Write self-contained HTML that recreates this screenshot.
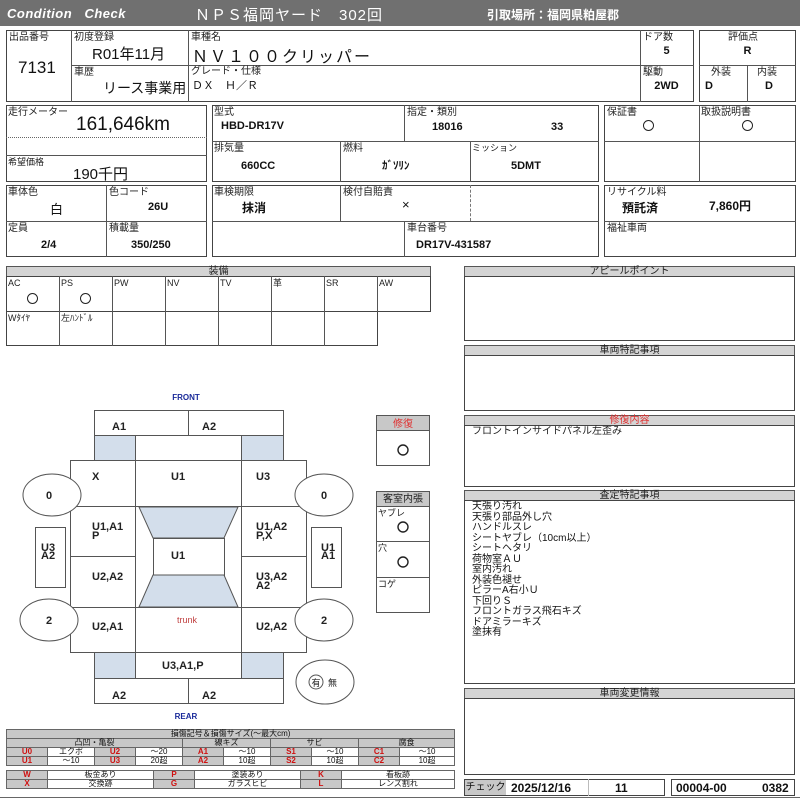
<!DOCTYPE html>
<html><head><meta charset="utf-8">
<style>
*{margin:0;padding:0;box-sizing:border-box}
body{width:800px;height:800px;background:#fff;position:relative;overflow:hidden;font-family:"Liberation Sans","Noto Sans CJK JP",sans-serif;color:#111}
.a{position:absolute}
.bx{position:absolute;border:1px solid #444}
.l{position:absolute;font-size:10px;color:#222;white-space:nowrap;line-height:11px}
.v{position:absolute;font-size:12px;font-weight:bold;white-space:nowrap;text-align:center;line-height:14px}
.hl{position:absolute;height:1px;background:#555}
.vl{position:absolute;width:1px;background:#555}
.hd{position:absolute;background:#d4d4d4;border:1px solid #555;font-size:10px;line-height:9px;text-align:center;color:#222}
.o{position:absolute;width:11px;height:11px;border:1.5px solid #222;border-radius:50%}
table.lg{position:absolute;border-collapse:collapse;font-size:8px;table-layout:fixed}
table.lg td{border:1px solid #666;text-align:center;height:9px;line-height:8px;padding:0;white-space:nowrap}
td.r{background:#c8c8c8;color:#d01010;font-weight:bold}
td.g{background:#c8c8c8}
</style></head><body>

<!-- header -->
<div class="a" style="left:0;top:0;width:800px;height:26px;background:#707070"></div>
<div class="a" style="left:7px;top:6px;color:#fff;font-style:italic;font-weight:bold;font-size:13px;letter-spacing:0.5px">Condition&nbsp;&nbsp;&nbsp;Check</div>
<div class="a" style="left:195px;top:4px;color:#fff;font-size:15px;letter-spacing:1px">ＮＰＳ福岡ヤード　302回</div>
<div class="a" style="left:487px;top:6px;color:#fff;font-size:12px;font-weight:bold">引取場所：福岡県粕屋郡</div>

<!-- top block -->
<div class="bx" style="left:6px;top:30px;width:688px;height:72px"></div>
<div class="vl" style="left:71px;top:30px;height:72px"></div>
<div class="vl" style="left:188px;top:30px;height:72px"></div>
<div class="vl" style="left:640px;top:30px;height:72px"></div>
<div class="hl" style="left:71px;top:65px;width:623px"></div>
<div class="l" style="left:9px;top:32px">出品番号</div>
<div class="a" style="left:18px;top:58px;font-size:17px">7131</div>
<div class="l" style="left:74px;top:32px">初度登録</div>
<div class="a" style="left:92px;top:43px;font-size:15px">R01年11月</div>
<div class="l" style="left:74px;top:67px">車歴</div>
<div class="a" style="left:103px;top:78px;font-size:14px">リース事業用</div>
<div class="l" style="left:191px;top:32px">車種名</div>
<div class="a" style="left:192px;top:43px;font-size:16px;letter-spacing:2px">ＮＶ１００クリッパー</div>
<div class="l" style="left:191px;top:66px">グレード・仕様</div>
<div class="a" style="left:192px;top:77px;font-size:11px">ＤＸ　Ｈ／Ｒ</div>
<div class="l" style="left:643px;top:32px">ドア数</div>
<div class="v" style="left:640px;top:44px;width:53px;font-size:11px">5</div>
<div class="l" style="left:643px;top:67px">駆動</div>
<div class="v" style="left:640px;top:79px;width:53px;font-size:11px">2WD</div>
<div class="bx" style="left:699px;top:30px;width:97px;height:72px"></div>
<div class="hl" style="left:699px;top:65px;width:97px"></div>
<div class="vl" style="left:747px;top:65px;height:37px"></div>
<div class="l" style="left:728px;top:32px">評価点</div>
<div class="v" style="left:699px;top:44px;width:97px;font-size:11px">R</div>
<div class="l" style="left:711px;top:67px">外装</div>
<div class="l" style="left:757px;top:67px">内装</div>
<div class="v" style="left:705px;top:79px;font-size:11px">D</div>
<div class="v" style="left:765px;top:79px;font-size:11px">D</div>

<!-- row 2 -->
<div class="bx" style="left:6px;top:105px;width:201px;height:77px"></div>
<div class="a" style="left:6px;top:137px;width:201px;border-top:1px dotted #666"></div>
<div class="hl" style="left:6px;top:155px;width:201px"></div>
<div class="l" style="left:8px;top:107px">走行メーター</div>
<div class="a" style="left:76px;top:114px;font-size:19px">161,646km</div>
<div class="l" style="left:8px;top:157px;font-size:9px">希望価格</div>
<div class="a" style="left:73px;top:163px;font-size:15px">190千円</div>

<div class="bx" style="left:212px;top:105px;width:387px;height:77px"></div>
<div class="hl" style="left:212px;top:141px;width:387px"></div>
<div class="vl" style="left:404px;top:105px;height:36px"></div>
<div class="vl" style="left:340px;top:141px;height:41px"></div>
<div class="vl" style="left:470px;top:141px;height:41px"></div>
<div class="l" style="left:214px;top:107px">型式</div>
<div class="v" style="left:221px;top:119px;font-size:11px">HBD-DR17V</div>
<div class="l" style="left:407px;top:107px">指定・類別</div>
<div class="v" style="left:432px;top:120px;font-size:11px">18016</div>
<div class="v" style="left:551px;top:120px;font-size:11px">33</div>
<div class="l" style="left:214px;top:143px">排気量</div>
<div class="v" style="left:241px;top:159px;font-size:11px">660CC</div>
<div class="l" style="left:343px;top:143px">燃料</div>
<div class="v" style="left:382px;top:159px;font-size:11px">ｶﾞｿﾘﾝ</div>
<div class="l" style="left:472px;top:143px;font-size:9px">ミッション</div>
<div class="v" style="left:511px;top:159px;font-size:11px">5DMT</div>

<div class="bx" style="left:604px;top:105px;width:192px;height:77px"></div>
<div class="hl" style="left:604px;top:141px;width:192px"></div>
<div class="vl" style="left:699px;top:105px;height:77px"></div>
<div class="l" style="left:607px;top:107px">保証書</div>
<div class="o" style="left:643px;top:120px"></div>
<div class="l" style="left:701px;top:107px">取扱説明書</div>
<div class="o" style="left:742px;top:120px"></div>

<!-- row 3 -->
<div class="bx" style="left:6px;top:185px;width:201px;height:72px"></div>
<div class="hl" style="left:6px;top:221px;width:201px"></div>
<div class="vl" style="left:106px;top:185px;height:72px"></div>
<div class="l" style="left:8px;top:187px">車体色</div>
<div class="a" style="left:50px;top:199px;font-size:13px">白</div>
<div class="l" style="left:109px;top:187px">色コード</div>
<div class="v" style="left:148px;top:200px;font-size:11px">26U</div>
<div class="l" style="left:8px;top:223px">定員</div>
<div class="v" style="left:41px;top:238px;font-size:11px">2/4</div>
<div class="l" style="left:109px;top:223px">積載量</div>
<div class="v" style="left:131px;top:238px;font-size:11px">350/250</div>

<div class="bx" style="left:212px;top:185px;width:387px;height:72px"></div>
<div class="hl" style="left:212px;top:221px;width:387px"></div>
<div class="vl" style="left:340px;top:185px;height:36px"></div>
<div class="a" style="left:470px;top:185px;height:36px;border-left:1px dashed #777"></div>
<div class="vl" style="left:404px;top:221px;height:36px"></div>
<div class="l" style="left:214px;top:187px">車検期限</div>
<div class="a" style="left:242px;top:199px;font-size:12px;font-weight:bold">抹消</div>
<div class="l" style="left:343px;top:187px">検付自賠責</div>
<div class="a" style="left:402px;top:197px;font-size:13px">×</div>
<div class="l" style="left:407px;top:223px">車台番号</div>
<div class="v" style="left:416px;top:238px;font-size:11px">DR17V-431587</div>

<div class="bx" style="left:604px;top:185px;width:192px;height:72px"></div>
<div class="hl" style="left:604px;top:221px;width:192px"></div>
<div class="l" style="left:607px;top:187px">リサイクル料</div>
<div class="a" style="left:622px;top:199px;font-size:12px;font-weight:bold">預託済</div>
<div class="v" style="left:709px;top:199px;font-size:12px">7,860円</div>
<div class="l" style="left:607px;top:223px">福祉車両</div>

<!-- 装備 -->
<div class="hd" style="left:6px;top:266px;width:425px;height:11px">装備</div>
<div class="bx" style="left:6px;top:276px;width:425px;height:36px"></div>
<div class="bx" style="left:6px;top:311px;width:372px;height:35px"></div>
<div class="vl" style="left:59px;top:276px;height:70px"></div>
<div class="vl" style="left:112px;top:276px;height:70px"></div>
<div class="vl" style="left:165px;top:276px;height:70px"></div>
<div class="vl" style="left:218px;top:276px;height:70px"></div>
<div class="vl" style="left:271px;top:276px;height:70px"></div>
<div class="vl" style="left:324px;top:276px;height:70px"></div>
<div class="vl" style="left:377px;top:276px;height:36px"></div>
<div class="l" style="left:8px;top:278px;font-size:9px">AC</div>
<div class="l" style="left:61px;top:278px;font-size:9px">PS</div>
<div class="l" style="left:114px;top:278px;font-size:9px">PW</div>
<div class="l" style="left:167px;top:278px;font-size:9px">NV</div>
<div class="l" style="left:220px;top:278px;font-size:9px">TV</div>
<div class="l" style="left:273px;top:278px;font-size:9px">革</div>
<div class="l" style="left:326px;top:278px;font-size:9px">SR</div>
<div class="l" style="left:379px;top:278px;font-size:9px">AW</div>
<div class="o" style="left:27px;top:293px"></div>
<div class="o" style="left:80px;top:293px"></div>
<div class="l" style="left:8px;top:313px;font-size:9px">Wﾀｲﾔ</div>
<div class="l" style="left:61px;top:313px;font-size:9px">左ﾊﾝﾄﾞﾙ</div>

<!-- right panels -->
<div class="hd" style="left:464px;top:266px;width:331px;height:11px">アピールポイント</div>
<div class="bx" style="left:464px;top:276px;width:331px;height:65px"></div>
<div class="hd" style="left:464px;top:345px;width:331px;height:11px">車両特記事項</div>
<div class="bx" style="left:464px;top:355px;width:331px;height:56px"></div>
<div class="hd" style="left:464px;top:415px;width:331px;height:11px;color:#e03030">修復内容</div>
<div class="bx" style="left:464px;top:425px;width:331px;height:62px"></div>
<div class="l" style="left:472px;top:426px">フロントインサイドパネル左歪み</div>
<div class="hd" style="left:464px;top:490px;width:331px;height:11px">査定特記事項</div>
<div class="bx" style="left:464px;top:500px;width:331px;height:184px"></div>
<div class="a" style="left:472px;top:502px;font-size:10px;line-height:10.5px">天張り汚れ<br>天張り部品外し穴<br>ハンドルスレ<br>シートヤブレ（10cm以上）<br>シートヘタリ<br>荷物室ＡＵ<br>室内汚れ<br>外装色褪せ<br>ピラーA右小Ｕ<br>下回りＳ<br>フロントガラス飛石キズ<br>ドアミラーキズ<br>塗抹有</div>
<div class="hd" style="left:464px;top:688px;width:331px;height:11px">車両変更情報</div>
<div class="bx" style="left:464px;top:698px;width:331px;height:77px"></div>

<div class="bx" style="left:464px;top:779px;width:201px;height:17px"></div>
<div class="a" style="left:465px;top:780px;width:41px;height:15px;background:#c8c8c8;font-size:10px;line-height:15px;text-align:center">チェック</div>
<div class="vl" style="left:588px;top:779px;height:17px;background:#bbb"></div>
<div class="v" style="left:511px;top:781px;font-size:12px">2025/12/16</div>
<div class="v" style="left:615px;top:781px;font-size:12px">11</div>
<div class="bx" style="left:671px;top:779px;width:124px;height:17px"></div>
<div class="v" style="left:676px;top:781px;font-size:12px">00004-00</div>
<div class="v" style="left:762px;top:781px;font-size:12px">0382</div>

<!-- car diagram -->
<svg class="a" style="left:0;top:380px" width="460" height="345" viewBox="0 380 460 345" font-family="Liberation Sans, Noto Sans CJK JP, sans-serif">
<g stroke="#555" stroke-width="1" fill="none">
<rect x="94.5" y="410.5" width="189" height="25"/>
<line x1="188.5" y1="410" x2="188.5" y2="435"/>
<rect x="94.5" y="435.5" width="41" height="25" fill="#d3deeb"/>
<rect x="241.5" y="435.5" width="42" height="25" fill="#d3deeb"/>
<line x1="135.5" y1="435" x2="135.5" y2="460"/>
<line x1="241.5" y1="435" x2="241.5" y2="460"/>
<rect x="70.5" y="460.5" width="236" height="192"/>
<line x1="135.5" y1="460" x2="135.5" y2="652"/>
<line x1="241.5" y1="460" x2="241.5" y2="652"/>
<line x1="70" y1="506.5" x2="306" y2="506.5"/>
<line x1="70" y1="556.5" x2="135" y2="556.5"/>
<line x1="241" y1="556.5" x2="306" y2="556.5"/>
<line x1="70" y1="607.5" x2="306" y2="607.5"/>
<polygon points="139,507 238,507 224,538 153,538" fill="#d3deeb"/>
<rect x="153.5" y="538.5" width="71" height="37" fill="#fff"/>
<polygon points="153,575 224,575 238,607 139,607" fill="#d3deeb"/>
<rect x="94.5" y="652.5" width="41" height="26" fill="#d3deeb"/>
<rect x="241.5" y="652.5" width="42" height="26" fill="#d3deeb"/>
<rect x="135.5" y="652.5" width="106" height="26"/>
<rect x="94.5" y="678.5" width="189" height="25"/>
<line x1="188.5" y1="678" x2="188.5" y2="703"/>
<ellipse cx="52" cy="495" rx="29" ry="21" fill="#fff"/>
<ellipse cx="49" cy="620" rx="29" ry="21" fill="#fff"/>
<ellipse cx="324" cy="495" rx="29" ry="21" fill="#fff"/>
<ellipse cx="324" cy="620" rx="29" ry="21" fill="#fff"/>
<rect x="35.5" y="527.5" width="30" height="60"/>
<rect x="311.5" y="527.5" width="30" height="60"/>
<ellipse cx="325" cy="682" rx="29" ry="22"/>
<circle cx="316" cy="682" r="7"/>
<rect x="376.5" y="415.5" width="53" height="50"/>
<rect x="377" y="416" width="52" height="15" fill="#c8c8c8" stroke="none"/>
<line x1="376" y1="430.5" x2="429" y2="430.5"/>
<rect x="376.5" y="491.5" width="53" height="121"/>
<rect x="377" y="492" width="52" height="14" fill="#c8c8c8" stroke="none"/>
<line x1="376" y1="506.5" x2="429" y2="506.5"/>
<line x1="376" y1="541.5" x2="429" y2="541.5"/>
<line x1="376" y1="577.5" x2="429" y2="577.5"/>
</g>
<g stroke="#222" stroke-width="1.4" fill="none">
<circle cx="403" cy="450" r="5"/>
<circle cx="403" cy="527" r="5"/>
<circle cx="403" cy="562" r="5"/>
</g>
<g font-size="11" font-weight="bold" fill="#222">
<text x="186" y="400" font-size="8" fill="#1a2a9a" text-anchor="middle">FRONT</text>
<text x="186" y="719" font-size="8" fill="#1a2a9a" text-anchor="middle">REAR</text>
<text x="112" y="430">A1</text><text x="202" y="430">A2</text>
<text x="92" y="480">X</text><text x="171" y="480">U1</text><text x="256" y="480">U3</text>
<text x="92" y="530">U1,A1</text><text x="92" y="539">P</text>
<text x="256" y="530">U1,A2</text><text x="256" y="539">P,X</text>
<text x="171" y="559">U1</text>
<text x="92" y="580">U2,A2</text>
<text x="256" y="580">U3,A2</text><text x="256" y="589">A2</text>
<text x="92" y="630">U2,A1</text>
<text x="256" y="630">U2,A2</text>
<text x="162" y="669">U3,A1,P</text>
<text x="112" y="699">A2</text><text x="202" y="699">A2</text>
<text x="49" y="499" text-anchor="middle">0</text>
<text x="49" y="624" text-anchor="middle">2</text>
<text x="324" y="499" text-anchor="middle">0</text>
<text x="324" y="624" text-anchor="middle">2</text>
<text x="41" y="551">U3</text><text x="41" y="559">A2</text>
<text x="321" y="551">U1</text><text x="321" y="559">A1</text>
</g>
<text x="187" y="623" font-size="9" fill="#c04040" text-anchor="middle">trunk</text>
<text x="316" y="686" font-size="9" text-anchor="middle" fill="#222">有</text>
<text x="328" y="686" font-size="9" fill="#222">無</text>
<text x="403" y="427" font-size="10" fill="#e03030" text-anchor="middle">修復</text>
<text x="403" y="502" font-size="10" fill="#222" text-anchor="middle">客室内張</text>
<text x="378" y="516" font-size="9" fill="#222">ヤブレ</text>
<text x="378" y="551" font-size="9" fill="#222">穴</text>
<text x="378" y="587" font-size="9" fill="#222">コゲ</text>
</svg>

<!-- legend -->
<table class="lg" style="left:6px;top:729px;width:448px">
<colgroup><col style="width:41px"><col style="width:47px"><col style="width:41px"><col style="width:47px"><col style="width:41px"><col style="width:47px"><col style="width:41px"><col style="width:47px"><col style="width:41px"><col style="width:55px"></colgroup>
<tr><td colspan="10" class="g">損傷記号＆損傷サイズ(～最大cm)</td></tr>
<tr><td colspan="4" class="g">凸凹・亀裂</td><td colspan="2" class="g">線キズ</td><td colspan="2" class="g">サビ</td><td colspan="2" class="g">腐食</td></tr>
<tr><td class="r">U0</td><td>エクボ</td><td class="r">U2</td><td>～20</td><td class="r">A1</td><td>～10</td><td class="r">S1</td><td>～10</td><td class="r">C1</td><td>～10</td></tr>
<tr><td class="r">U1</td><td>～10</td><td class="r">U3</td><td>20超</td><td class="r">A2</td><td>10超</td><td class="r">S2</td><td>10超</td><td class="r">C2</td><td>10超</td></tr>
</table>
<table class="lg" style="left:6px;top:770px;width:448px">
<colgroup><col style="width:41px"><col style="width:106px"><col style="width:41px"><col style="width:106px"><col style="width:41px"><col style="width:113px"></colgroup>
<tr><td class="r">W</td><td>板金あり</td><td class="r">P</td><td>塗装あり</td><td class="r">K</td><td>看板跡</td></tr>
<tr><td class="r">X</td><td>交換跡</td><td class="r">G</td><td>ガラスヒビ</td><td class="r">L</td><td>レンズ割れ</td></tr>
</table>
<div class="hl" style="left:0;top:797px;width:800px;background:#666"></div>
</body></html>
